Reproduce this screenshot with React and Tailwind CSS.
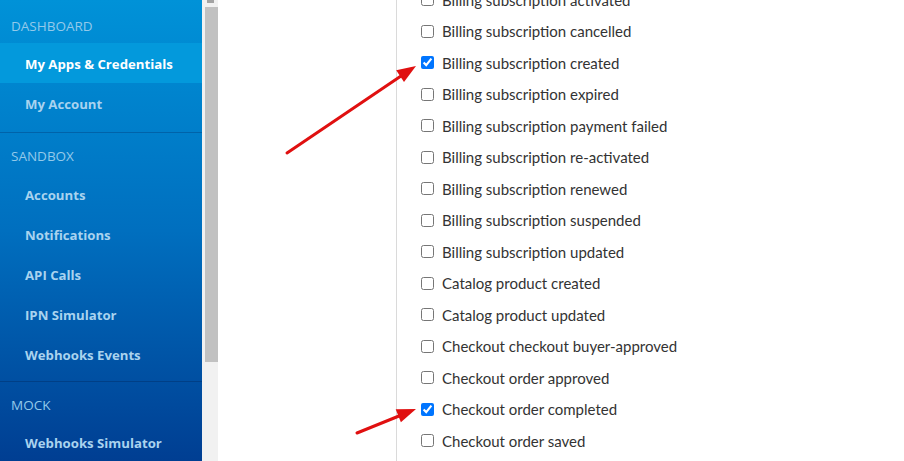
import React from "react";

const items = [
  ["Billing subscription activated", false],
  ["Billing subscription cancelled", false],
  ["Billing subscription created", true],
  ["Billing subscription expired", false],
  ["Billing subscription payment failed", false],
  ["Billing subscription re-activated", false],
  ["Billing subscription renewed", false],
  ["Billing subscription suspended", false],
  ["Billing subscription updated", false],
  ["Catalog product created", false],
  ["Catalog product updated", false],
  ["Checkout checkout buyer-approved", false],
  ["Checkout order approved", false],
  ["Checkout order completed", true],
  ["Checkout order saved", false],
];

function NavItem({ label, active }) {
  return (
    <div
      className={
        "h-[40px] flex items-center pl-[25px] pt-[3px] text-[13.2px] font-bold " +
        (active ? "bg-[#0399dc] text-white" : "text-[#a9d3ef]")
      }
    >
      {label}
    </div>
  );
}

function Header({ label }) {
  return (
    <div className="h-[20px] flex items-center pl-[11px] text-[13.5px] text-[#93c9ea] uppercase">
      {label}
    </div>
  );
}

export default function App() {
  return (
    <div className="flex h-[461px] w-[904px] overflow-hidden bg-white" style={{ fontFamily: "'Open Sans', 'Noto Sans', sans-serif" }}>
      <div className="w-[202px] shrink-0 bg-gradient-to-b from-[#0092d8] via-[#006fbf] to-[#003e92]">
        <div className="pt-[16px] pb-[9px] border-b border-[#0063a9]">
          <Header label="Dashboard" />
          <div className="mt-[7px]">
            <NavItem label="My Apps & Credentials" active />
            <NavItem label="My Account" />
          </div>
        </div>
        <div className="pt-[13px] pb-[7px] border-b border-[#003f86]">
          <Header label="Sandbox" />
          <div className="mt-[8px]">
            <NavItem label="Accounts" />
            <NavItem label="Notifications" />
            <NavItem label="API Calls" />
            <NavItem label="IPN Simulator" />
            <NavItem label="Webhooks Events" />
          </div>
        </div>
        <div className="pt-[13px]">
          <Header label="Mock" />
          <div className="mt-[7px]">
            <NavItem label="Webhooks Simulator" />
          </div>
        </div>
      </div>
      <div className="w-[16px] shrink-0 bg-[#f1f1f1] flex flex-col items-center">
        <div className="w-[7px] h-[3px] bg-[#a3a3a3]" />
        <div className="mt-[4px] w-[13px] ml-[2px] h-[355px] bg-[#c1c1c1]" />
      </div>
      <div className="relative flex-1 pl-[178px]">
        <div className="h-full border-l border-[#dadada] pl-[24px] overflow-hidden" style={{ fontFamily: "Lato, 'Open Sans', sans-serif" }}>
          <div className="-mt-[16px]">
            {items.map(([label, checked]) => (
              <div key={label} className="h-[31.5px] flex items-center gap-[8px] text-[15px] text-[#333]">
                <input type="checkbox" checked={checked} readOnly className="m-0 w-[13px] h-[13px] accent-[#0075ff]" />
                <span>{label}</span>
              </div>
            ))}
          </div>
        </div>
        <svg className="absolute left-0 top-0 pointer-events-none" width="686" height="461" viewBox="218 0 686 461">
          <line x1="287" y1="153" x2="401" y2="76" stroke="#e01010" strokeWidth="3" strokeLinecap="round" />
          <polygon points="416,66 404,82 396.2,70.3" fill="#e01010" />
          <line x1="357" y1="433" x2="399" y2="416" stroke="#e01010" strokeWidth="3" strokeLinecap="round" />
          <polygon points="416,409 400.9,422.2 395.7,409.2" fill="#e01010" />
        </svg>
      </div>
    </div>
  );
}
